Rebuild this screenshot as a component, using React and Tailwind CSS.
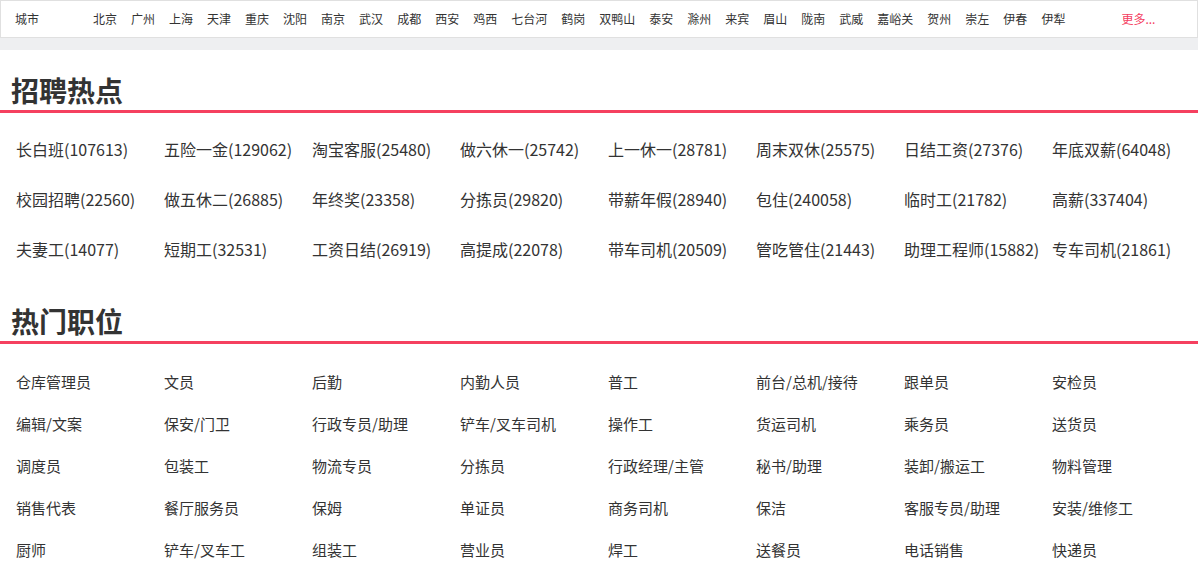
const cities=["北京","广州","上海","天津","重庆","沈阳","南京","武汉","成都","西安","鸡西","七台河","鹤岗","双鸭山","泰安","滁州","来宾","眉山","陇南","武威","嘉峪关","贺州","崇左","伊春","伊犁"];
const hot=["长白班(107613)","五险一金(129062)","淘宝客服(25480)","做六休一(25742)","上一休一(28781)","周末双休(25575)","日结工资(27376)","年底双薪(64048)","校园招聘(22560)","做五休二(26885)","年终奖(23358)","分拣员(29820)","带薪年假(28940)","包住(240058)","临时工(21782)","高薪(337404)","夫妻工(14077)","短期工(32531)","工资日结(26919)","高提成(22078)","带车司机(20509)","管吃管住(21443)","助理工程师(15882)","专车司机(21861)"];
const jobs=["仓库管理员","文员","后勤","内勤人员","普工","前台/总机/接待","跟单员","安检员","编辑/文案","保安/门卫","行政专员/助理","铲车/叉车司机","操作工","货运司机","乘务员","送货员","调度员","包装工","物流专员","分拣员","行政经理/主管","秘书/助理","装卸/搬运工","物料管理","销售代表","餐厅服务员","保姆","单证员","商务司机","保洁","客服专员/助理","安装/维修工","厨师","铲车/叉车工","组装工","营业员","焊工","送餐员","电话销售","快递员"];
export default function App(){
return <div className="w-[1198px] h-[587px] overflow-hidden bg-white text-[#333]" style={{fontFamily:'"Noto Sans CJK SC","Liberation Sans",sans-serif'}}>
<div className="h-[38px] flex items-center border border-[#e0e0e0] bg-white text-[12px] pl-[14px]">
<span className="w-[78px]">城市</span>
<div className="flex gap-[14px]">{cities.map(c=><span key={c}>{c}</span>)}</div>
<span className="ml-[56px] text-[#f5405f]">更多...</span>
</div>
<div className="h-[12px] bg-[#eeeff1]"></div>
<div className="pt-[20px]">
<h2 className="text-[28px] font-bold leading-[40px] pl-[11px] text-[#333]">招聘热点</h2>
<div className="h-[3px] bg-[#f5405f]"></div>
<div className="grid grid-cols-[repeat(8,148px)] pl-[16px] pt-[24px] text-[16px]">
{hot.map(h=><div key={h} className="h-[50px] leading-[24px] whitespace-nowrap">{h}</div>)}
</div>
<h2 className="text-[28px] font-bold leading-[40px] pl-[11px] mt-[14px] text-[#333]">热门职位</h2>
<div className="h-[3px] bg-[#f5405f]"></div>
<div className="grid grid-cols-[repeat(8,148px)] pl-[16px] pt-[27px] text-[15px]">
{jobs.map((h,i)=><div key={i} className="h-[42px] leading-[22px] whitespace-nowrap">{h}</div>)}
</div>
</div>
</div>}
